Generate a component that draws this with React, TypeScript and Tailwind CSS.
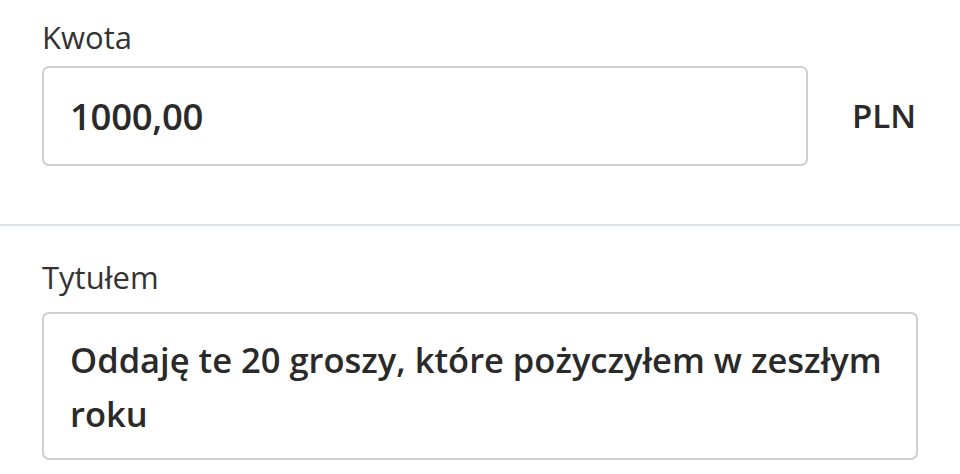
import React from 'react'

const font = { fontFamily: '"Open Sans", "Noto Sans", sans-serif' }

const App = () => {
  return (
    <div className="w-[960px] h-[474px] bg-white overflow-hidden text-[#2a2a2a]" style={font}>
      <div className="pl-[42px] pt-[19px]">
        <label className="block text-[31px] leading-[36px] text-[#333]">Kwota</label>
        <div className="flex items-center mt-[11px]">
          <div className="w-[766px] h-[100px] border-2 border-[#cfcfcf] rounded-[7px] flex items-center px-[26px]">
            <span className="text-[36.5px] font-semibold tracking-[-0.3px]">1000,00</span>
          </div>
          <div className="flex-1 flex justify-center">
            <span className="text-[33px] font-semibold">PLN</span>
          </div>
        </div>
      </div>
      <div className="mt-[58px] h-[2px] bg-[#dde3ec]" />
      <div className="pl-[42px] pt-[33px]">
        <label className="block text-[31px] leading-[36px] text-[#333]">Tytułem</label>
        <div className="mt-[17px] w-[876px] h-[148px] border-2 border-[#cfcfcf] rounded-[7px] px-[26px] pt-[19px]">
          <p className="text-[34.5px] font-semibold leading-[54px]">
            Oddaję te 20 groszy, które pożyczyłem w zeszłym roku
          </p>
        </div>
      </div>
    </div>
  )
}

export default App
